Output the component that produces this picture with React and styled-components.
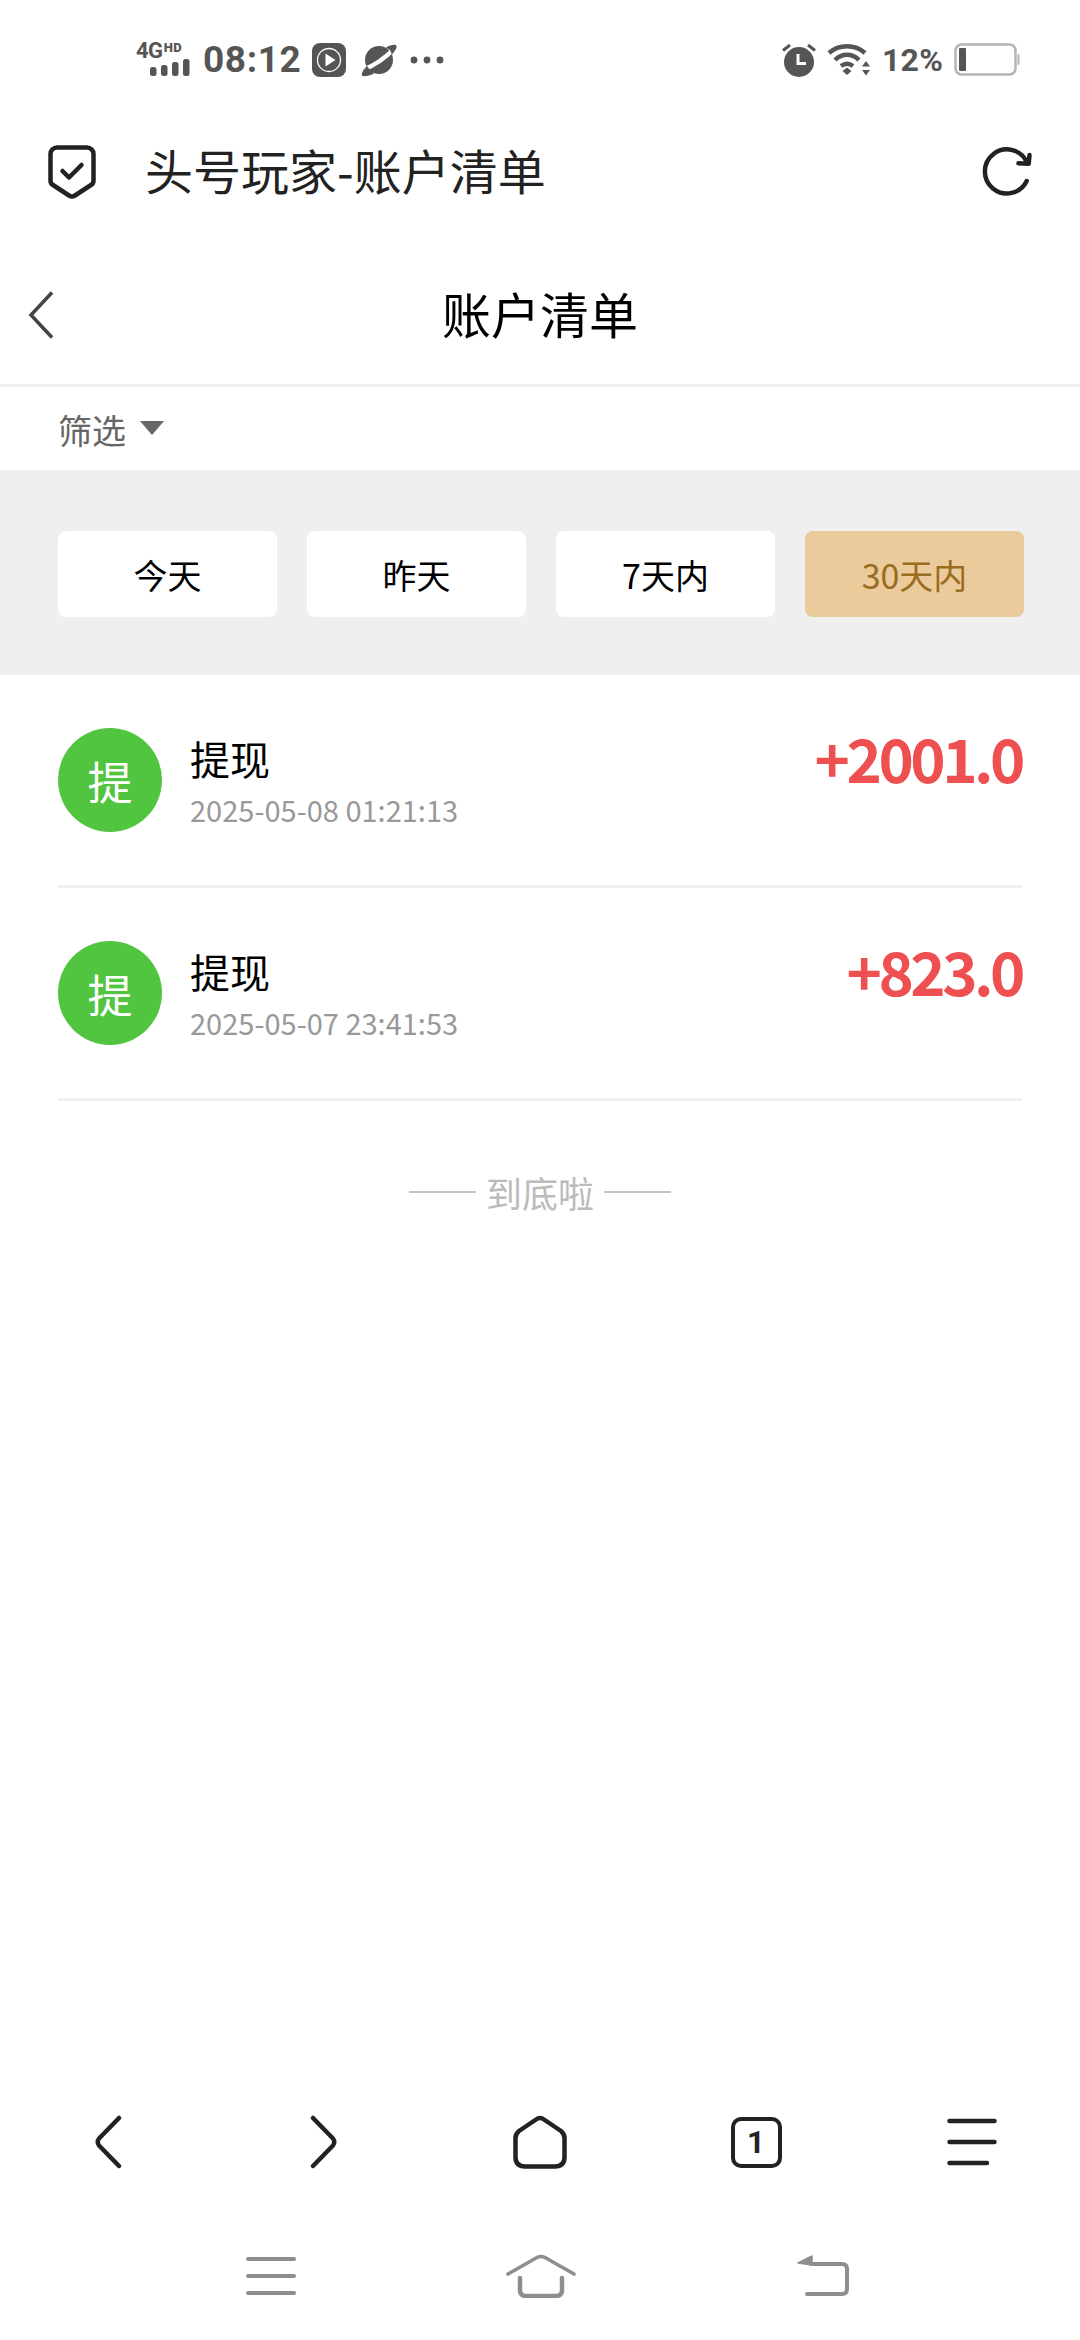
import React from 'react';
import styled, { createGlobalStyle } from 'styled-components';

const Global = createGlobalStyle`
  html, body { margin: 0; padding: 0; background: #fff; }
  body { font-family: "Noto Sans CJK SC", "Noto Sans", sans-serif; }
`;

const Page = styled.div`
  width: 1080px;
  height: 2340px;
  display: flex;
  flex-direction: column;
  background: #fff;
  overflow: hidden;
`;

/* status bar */
const StatusBar = styled.div`
  height: 120px;
  flex: none;
  display: flex;
  align-items: center;
  padding: 0 60px 0 136px;
  box-sizing: border-box;
  color: #555;
  font-family: Roboto, sans-serif;
  font-weight: 700;
`;
const StatusSide = styled.div`
  display: flex;
  align-items: center;
  gap: ${p => p.$gap || 11}px;
  margin-left: ${p => (p.$right ? 'auto' : 0)};
`;
const Clock = styled.span`
  font-size: 37px;
  line-height: 40px;
  letter-spacing: 0.6px;
`;
const Percent = styled.span`
  font-size: 32px;
  line-height: 40px;
  letter-spacing: 0.2px;
`;
const NetBox = styled.div`
  width: 54px;
  height: 34px;
  display: flex;
  flex-direction: column;
  align-items: flex-end;
  margin-right: 2px;
`;
const NetText = styled.div`
  width: 100%;
  height: 15px;
  display: flex;
  align-items: flex-start;
  font-size: 22px;
  line-height: 15px;
  letter-spacing: -0.5px;
  white-space: nowrap;
  small {
    font-size: 13px;
    line-height: 10px;
    letter-spacing: 0.4px;
    font-weight: 900;
    margin-left: 1px;
  }
`;
const PlanetIcon = styled.svg`
  margin-left: 4px;
`;
const DotsIcon = styled.svg`
  margin-left: 2px;
`;

/* browser address bar */
const AddressBar = styled.div`
  height: 104px;
  flex: none;
  display: flex;
  align-items: center;
  padding: 0 48px 0 48px;
`;
const AddressTitle = styled.div`
  margin: -7px 0 0 49px;
  font-size: 48px;
  line-height: 60px;
  color: #222;
  flex: 1;
`;

/* page title */
const NavBar = styled.div`
  height: 163px;
  flex: none;
  box-sizing: border-box;
  padding-top: 17px;
  border-bottom: 3px solid #f0f0f0;
  position: relative;
  display: flex;
  align-items: center;
  justify-content: center;
`;
const NavTitle = styled.div`
  font-size: 49px;
  line-height: 60px;
  color: #000;
`;
const BackButton = styled.div`
  position: absolute;
  left: 28px;
  top: 67px;
  display: flex;
`;

const FilterRow = styled.div`
  height: 83px;
  flex: none;
  display: flex;
  align-items: center;
  padding: 2px 0 0 58px;
  box-sizing: border-box;
  gap: 14px;
  color: #666;
  font-size: 34px;
`;
const Caret = styled.i`
  width: 0;
  height: 0;
  border-left: 12px solid transparent;
  border-right: 12px solid transparent;
  border-top: 14px solid #666;
  margin-top: -4px;
`;

const RangeBand = styled.div`
  height: 205px;
  flex: none;
  box-sizing: border-box;
  background: #efefef;
  padding: 61px 58px 0;
  display: flex;
  gap: 30px;
`;
const RangeButton = styled.div`
  width: 219px;
  height: 86px;
  flex: none;
  border-radius: 8px;
  display: flex;
  align-items: center;
  justify-content: center;
  font-size: 34px;
  background: ${p => (p.$active ? '#ebca9b' : '#fff')};
  color: ${p => (p.$active ? '#9a6c1e' : '#000')};
`;

const List = styled.div`
  padding: 0 58px;
`;
const Row = styled.div`
  height: 213px;
  box-sizing: border-box;
  padding-top: 53px;
  display: flex;
  align-items: flex-start;
  border-bottom: 3px solid #f0f0f0;
`;
const Avatar = styled.div`
  width: 104px;
  height: 104px;
  flex: none;
  border-radius: 50%;
  background: #52c540;
  color: #fff;
  font-size: 45px;
  display: flex;
  align-items: center;
  justify-content: center;
`;
const RowText = styled.div`
  margin-left: 28px;
  flex: 1;
  display: flex;
  flex-direction: column;
`;
const RowTitle = styled.div`
  font-size: 40px;
  line-height: 58px;
  color: #000;
  margin-top: 1px;
`;
const RowDate = styled.div`
  font-size: 29px;
  line-height: 40px;
  color: #999;
  margin-top: 2px;
`;
const Amount = styled.div`
  font-size: 60px;
  font-weight: 700;
  line-height: 70px;
  letter-spacing: -3.5px;
  color: #ee4f50;
  margin: -6px 0 0 0;
`;

const EndNote = styled.div`
  margin-top: 66px;
  display: flex;
  align-items: center;
  justify-content: center;
  gap: 10px;
  color: #bbb;
  font-size: 36px;
  line-height: 50px;
  &::before,
  &::after {
    content: '';
    width: 67px;
    height: 2px;
    background: #c4c4c4;
  }
`;

const Spacer = styled.div`
  flex: 1;
`;

const Toolbar = styled.div`
  height: 60px;
  flex: none;
  display: grid;
  grid-template-columns: repeat(5, 216px);
  justify-content: center;
  justify-items: center;
  align-items: center;
  margin-bottom: 74px;
`;
const TabBadge = styled.div`
  width: 51px;
  height: 51px;
  box-sizing: border-box;
  border: 4.5px solid #222;
  border-radius: 10px;
  display: flex;
  align-items: center;
  justify-content: center;
  font: 700 31px/1 Roboto, sans-serif;
  color: #222;
`;

const SystemBar = styled.div`
  height: 60px;
  flex: none;
  display: grid;
  grid-template-columns: 270px 270px 294px;
  padding-left: 136px;
  justify-items: center;
  align-items: center;
  margin-bottom: 34px;
`;

const ROWS = [
  { date: '2025-05-08 01:21:13', amount: '+2001.0' },
  { date: '2025-05-07 23:41:53', amount: '+823.0' },
];

const App = () => (
  <Page>
    <Global />
    <StatusBar>
      <StatusSide>
        <NetBox>
          <NetText>4G<small>HD</small></NetText>
          <svg width="40" height="19" viewBox="0 0 40 19" fill="#555">
            <rect x="0" y="9" width="6.5" height="9" rx="2.5" />
            <rect x="11" y="7" width="6.5" height="11" rx="2.5" />
            <rect x="22" y="4" width="6.5" height="14" rx="2.5" />
            <rect x="33" y="1" width="6.5" height="17" rx="2.5" />
          </svg>
        </NetBox>
        <Clock>08:12</Clock>
        <svg width="34" height="34" viewBox="0 0 34 34">
          <rect width="34" height="34" rx="8" fill="#555" />
          <circle cx="17" cy="17" r="11.5" fill="none" stroke="#fff" strokeWidth="1.3" />
          <path d="M13.5 10.5 L23.5 17 L13.5 23.5 Z" fill="#fff" />
        </svg>
        <PlanetIcon width="36" height="34" viewBox="0 0 36 34">
          <circle cx="18" cy="17" r="14" fill="#555" />
          <path d="M2 27 C12 23 23 16 33 6" fill="none" stroke="#fff" strokeWidth="4.5" />
          <path d="M25 4.5 C30 1.5 35 1 35.5 3 C36 5 34 8 31 11.5 L29 7 Z" fill="#555" />
          <path d="M6 23 C2 27 0 31 1 32.5 C2.5 34 8 33 13 30.5 L9 27 Z" fill="#555" />
        </PlanetIcon>
        <DotsIcon width="34" height="8" viewBox="0 0 34 8" fill="#555">
          <circle cx="4" cy="4" r="3.4" />
          <circle cx="17" cy="4" r="3.4" />
          <circle cx="30" cy="4" r="3.4" />
        </DotsIcon>
      </StatusSide>
      <StatusSide $right $gap={11}>
        <svg width="34" height="34" viewBox="0 0 34 34" fill="#555">
          <circle cx="17" cy="19" r="15" />
          <path d="M16 11 V20.5 H24" fill="none" stroke="#fff" strokeWidth="3" />
          <path d="M1 7.5 L8 2 M33 7.5 L26 2" stroke="#555" strokeWidth="3" />
        </svg>
        <svg width="44" height="34" viewBox="0 0 44 34" fill="none" stroke="#555" strokeWidth="4.5">
          <path d="M2 10 C12 1 28 1 38 10" />
          <path d="M8 17 C15 10 25 10 32 17" />
          <path d="M14 23 C18 20 22 20 26 23" />
          <path d="M15.5 28 L20 24.5 L24.5 28 L20 32 Z" fill="#555" stroke="none" />
          <path d="M35 23.5 L39 18 L43 23.5 Z M35 27 L39 32.5 L43 27 Z" fill="#555" stroke="none" />
        </svg>
        <Percent>12%</Percent>
        <svg width="66" height="34" viewBox="0 0 66 34">
          <rect x="1.5" y="1.5" width="60" height="30" rx="6" fill="none" stroke="#b5b5b5" strokeWidth="2.5" />
          <rect x="5" y="5" width="7" height="23" rx="1" fill="#555" />
          <rect x="63.5" y="11" width="2" height="11" rx="1" fill="#b5b5b5" />
        </svg>
      </StatusSide>
    </StatusBar>

    <AddressBar>
      <svg width="48" height="54" viewBox="0 0 48 54" fill="none" stroke="#222" strokeWidth="4.5" strokeLinejoin="round" strokeLinecap="round">
        <path d="M9 2.5 H39 A6.5 6.5 0 0 1 45.5 9 V36 A5 5 0 0 1 43 40 L27 50.5 A5.5 5.5 0 0 1 21 50.5 L5 40 A5 5 0 0 1 2.5 36 V9 A6.5 6.5 0 0 1 9 2.5 Z" />
        <path d="M14.5 26 L21 32.5 L33.5 20" />
      </svg>
      <AddressTitle>头号玩家-账户清单</AddressTitle>
      <svg width="50" height="50" viewBox="0 0 50 50" fill="none" stroke="#222" strokeWidth="4.5" strokeLinecap="round" strokeLinejoin="round">
        <path d="M44.7 34 A22 22 0 1 1 45 15.5" />
        <path d="M47.5 8 L46.7 16.7 L36.5 16.3" />
      </svg>
    </AddressBar>

    <NavBar>
      <BackButton>
        <svg width="26" height="48" viewBox="0 0 26 48" fill="none" stroke="#444" strokeWidth="3.5">
          <path d="M24 1.5 L3 24 L24 46.5" />
        </svg>
      </BackButton>
      <NavTitle>账户清单</NavTitle>
    </NavBar>

    <FilterRow>
      筛选<Caret />
    </FilterRow>

    <RangeBand>
      <RangeButton>今天</RangeButton>
      <RangeButton>昨天</RangeButton>
      <RangeButton>7天内</RangeButton>
      <RangeButton $active>30天内</RangeButton>
    </RangeBand>

    <List>
      {ROWS.map(r => (
        <Row key={r.date}>
          <Avatar>提</Avatar>
          <RowText>
            <RowTitle>提现</RowTitle>
            <RowDate>{r.date}</RowDate>
          </RowText>
          <Amount>{r.amount}</Amount>
        </Row>
      ))}
    </List>
    <EndNote>到底啦</EndNote>

    <Spacer />

    <Toolbar>
      <svg width="28" height="54" viewBox="0 0 28 54" fill="none" stroke="#222" strokeWidth="4.5" strokeLinecap="round" strokeLinejoin="round">
        <path d="M25 3 L5 23.5 Q2.5 27 5 30.5 L25 51" />
      </svg>
      <svg width="28" height="54" viewBox="0 0 28 54" fill="none" stroke="#222" strokeWidth="4.5" strokeLinecap="round" strokeLinejoin="round">
        <path d="M3 3 L23 23.5 Q25.5 27 23 30.5 L3 51" />
      </svg>
      <svg width="54" height="54" viewBox="0 0 54 54" fill="none" stroke="#222" strokeWidth="4.5" strokeLinejoin="round">
        <path d="M23 4.5 Q27 1.5 31 4.5 L48 16 Q51.5 19 51.5 23 V42 Q51.5 51.5 42 51.5 H12 Q2.5 51.5 2.5 42 V23 Q2.5 19 6 16 Z" />
      </svg>
      <TabBadge>1</TabBadge>
      <svg width="50" height="50" viewBox="0 0 50 50" fill="none" stroke="#222" strokeWidth="4.5" strokeLinecap="round">
        <path d="M2.5 4 H47.5 M2.5 25 H47.5 M2.5 46 H40" />
      </svg>
    </Toolbar>

    <SystemBar>
      <svg width="50" height="40" viewBox="0 0 50 40" fill="none" stroke="#8e8e8e" strokeWidth="4" strokeLinecap="round">
        <path d="M2 3 H48 M2 20 H48 M2 37 H48" />
      </svg>
      <svg width="70" height="44" viewBox="0 0 70 44" fill="none" stroke="#8e8e8e" strokeWidth="3.6" strokeLinecap="round" strokeLinejoin="round">
        <path d="M2 20 L31 3.5 Q35 1.5 39 3.5 L68 20" />
        <path d="M14 24 V36 Q14 42 20 42 H50 Q56 42 56 36 V24" strokeWidth="4.5" />
      </svg>
      <svg width="52" height="42" viewBox="0 0 52 42" fill="none" stroke="#8e8e8e" strokeWidth="4" strokeLinecap="round" strokeLinejoin="round">
        <path d="M14 9 H45 Q50 9 50 14 V34 Q50 39 45 39 H10" />
        <path d="M1 8 L15 1 V10 Z" fill="#8e8e8e" strokeWidth="1.5" />
      </svg>
    </SystemBar>
  </Page>
);

export default App;
